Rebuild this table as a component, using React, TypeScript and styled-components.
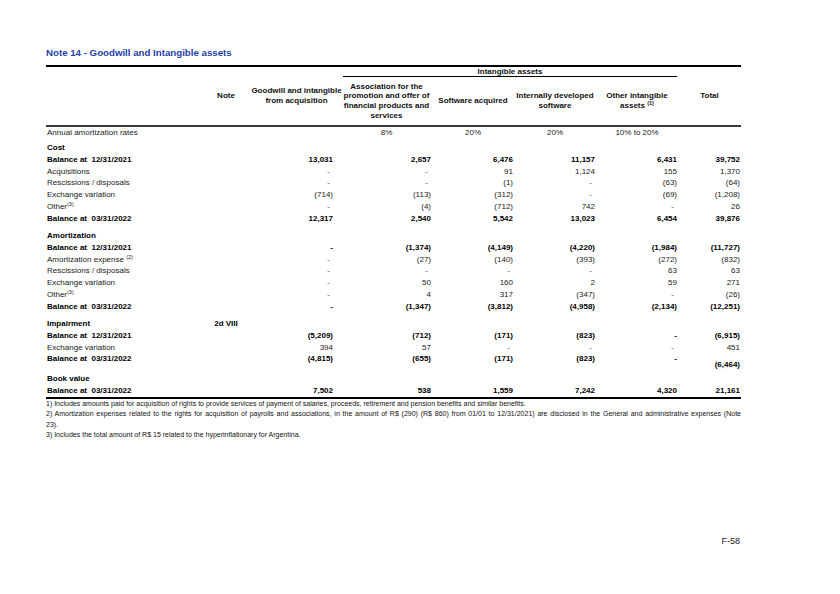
import React from 'react';
import styled, { createGlobalStyle } from 'styled-components';

const GlobalStyle = createGlobalStyle`
  html, body { margin: 0; padding: 0; background: #ffffff; }
  body { font-family: "Liberation Sans", Arial, sans-serif; color: #000; }
`;

const COLS = '154px 52px 89px 91px 82px 82px 82px 63px';
const NUM_PAD = [8, 1, 1, 1, 1, 1];

const Page = styled.div`
  width: 840px;
  height: 594px;
  box-sizing: border-box;
  padding: 47px 0 0 46px;
`;

const Sheet = styled.div`
  width: 695px;
`;

const Title = styled.h1`
  margin: 0 0 6px;
  font-size: 9.7px;
  line-height: 12px;
  font-weight: 700;
  color: #1f3fa6;
`;

const Header = styled.div`
  display: grid;
  grid-template-columns: ${COLS};
  grid-template-rows: 10px 48px;
  border-top: 2px solid #000;
  border-bottom: 2px solid #3a3a3a;
  font-size: 8px;
  font-weight: 700;
  line-height: 9.6px;
  color: #111;
`;

const HeadCell = styled.div<{ $col: string; $row: string }>`
  grid-column: ${(p) => p.$col};
  grid-row: ${(p) => p.$row};
  display: flex;
  align-items: center;
  justify-content: center;
  text-align: center;
  white-space: nowrap;
`;

const HeadText = styled.span`
  display: block;
  text-align: center;
`;

const GroupHead = styled.div`
  grid-column: 4 / 8;
  grid-row: 1;
  margin: 0 1px 0 2px;
  border-bottom: 1px solid #000;
  line-height: 9px;
  text-align: center;
`;

const Row = styled.div<{ $bold?: boolean; $gap?: number; $h?: number; $rule?: boolean }>`
  display: grid;
  grid-template-columns: ${COLS};
  height: ${(p) => p.$h ?? 11.75}px;
  margin-top: ${(p) => p.$gap ?? 0}px;
  font-size: 8px;
  line-height: 11.75px;
  font-weight: ${(p) => (p.$bold ? 700 : 400)};
  color: ${(p) => (p.$bold ? '#000' : '#222')};
  border-bottom: ${(p) => (p.$rule ? '2px solid #000' : 'none')};
`;

const Label = styled.div`
  padding-left: 1px;
  white-space: pre;
`;

const NoteCell = styled.div`
  text-align: center;
  font-weight: 700;
  color: #000;
`;

const Num = styled.div<{ $pad: number; $dash?: boolean; $low?: boolean }>`
  text-align: right;
  white-space: nowrap;
  padding-right: ${(p) => p.$pad + (p.$dash ? 3 : 0)}px;
  color: ${(p) => (p.$dash ? '#555' : 'inherit')};
  align-self: ${(p) => (p.$low ? 'end' : 'start')};
`;

const Rate = styled.div`
  text-align: center;
  white-space: nowrap;
`;

const Sup = styled.sup`
  font-size: 5.5px;
  line-height: 0;
  vertical-align: 3px;
`;

const Notes = styled.div`
  font-size: 7px;
  line-height: 10.5px;
  color: #111;
`;

const NoteLine = styled.div<{ $justify?: boolean }>`
  text-align: ${(p) => (p.$justify ? 'justify' : 'left')};
  text-align-last: ${(p) => (p.$justify ? 'justify' : 'auto')};
  white-space: nowrap;
`;

const PageNo = styled.div`
  margin-top: 95px;
  text-align: right;
  padding-right: 1px;
  font-size: 9px;
  line-height: 11px;
  color: #222;
`;

type DataRow = {
  label: React.ReactNode;
  values?: string[];
  bold?: boolean;
  gap?: number;
  note?: string;
  h?: number;
  lowLast?: boolean;
  rule?: boolean;
};

const other = (
  <>
    Other<Sup>(3)</Sup>
  </>
);

const rows: DataRow[] = [
  { label: 'Cost', bold: true, gap: 3.35 },
  { label: 'Balance at  12/31/2021', bold: true, values: ['13,031', '2,657', '6,476', '11,157', '6,431', '39,752'] },
  { label: 'Acquisitions', values: ['-', '-', '91', '1,124', '155', '1,370'] },
  { label: 'Rescissions / disposals', values: ['-', '-', '(1)', '-', '(63)', '(64)'] },
  { label: 'Exchange variation', values: ['(714)', '(113)', '(312)', '-', '(69)', '(1,208)'] },
  { label: other, values: ['-', '(4)', '(712)', '742', '-', '26'] },
  { label: 'Balance at  03/31/2022', bold: true, values: ['12,317', '2,540', '5,542', '13,023', '6,454', '39,876'] },

  { label: 'Amortization', bold: true, gap: 5.75 },
  { label: 'Balance at  12/31/2021', bold: true, values: ['-', '(1,374)', '(4,149)', '(4,220)', '(1,984)', '(11,727)'] },
  {
    label: (
      <>
        Amortization expense <Sup>(2)</Sup>
      </>
    ),
    values: ['-', '(27)', '(140)', '(393)', '(272)', '(832)'],
  },
  { label: 'Rescissions / disposals', values: ['-', '-', '-', '-', '63', '63'] },
  { label: 'Exchange variation', values: ['-', '50', '160', '2', '59', '271'] },
  { label: other, values: ['-', '4', '317', '(347)', '-', '(26)'] },
  { label: 'Balance at  03/31/2022', bold: true, values: ['-', '(1,347)', '(3,812)', '(4,958)', '(2,134)', '(12,251)'] },

  { label: 'Impairment', bold: true, gap: 5.75, note: '2d VIII' },
  { label: 'Balance at  12/31/2021', bold: true, values: ['(5,209)', '(712)', '(171)', '(823)', '-', '(6,915)'] },
  { label: 'Exchange variation', values: ['394', '57', '-', '-', '-', '451'] },
  { label: 'Balance at  03/31/2022', bold: true, h: 17.5, lowLast: true, values: ['(4,815)', '(655)', '(171)', '(823)', '-', '(6,464)'] },

  { label: 'Book value', bold: true, gap: 2.25 },
  { label: 'Balance at  03/31/2022', bold: true, rule: true, values: ['7,502', '538', '1,559', '7,242', '4,320', '21,161'] },
];

export default function App() {
  return (
    <>
      <GlobalStyle />
      <Page>
        <Sheet>
          <Title>Note 14 - Goodwill and Intangible assets</Title>

          <Header>
            <HeadCell $col="2" $row="1 / 3">
              <HeadText>Note</HeadText>
            </HeadCell>
            <HeadCell $col="3" $row="1 / 3">
              <HeadText>
                Goodwill and intangible
                <br />
                from acquisition
              </HeadText>
            </HeadCell>
            <GroupHead>Intangible assets</GroupHead>
            <HeadCell $col="4" $row="2">
              <HeadText>
                Association for the
                <br />
                promotion and offer of
                <br />
                financial products and
                <br />
                services
              </HeadText>
            </HeadCell>
            <HeadCell $col="5" $row="2">
              <HeadText>Software acquired</HeadText>
            </HeadCell>
            <HeadCell $col="6" $row="2">
              <HeadText>
                Internally developed
                <br />
                software
              </HeadText>
            </HeadCell>
            <HeadCell $col="7" $row="2">
              <HeadText>
                Other intangible
                <br />
                assets <Sup>(1)</Sup>
              </HeadText>
            </HeadCell>
            <HeadCell $col="8" $row="1 / 3">
              <HeadText>Total</HeadText>
            </HeadCell>
          </Header>

          <Row>
            <Label>Annual amortization rates</Label>
            <div />
            <div />
            <Rate>8%</Rate>
            <Rate>20%</Rate>
            <Rate>20%</Rate>
            <Rate>10% to 20%</Rate>
            <div />
          </Row>

          {rows.map((r, i) => (
            <Row key={i} $bold={r.bold} $gap={r.gap} $h={r.h} $rule={r.rule}>
              <Label>{r.label}</Label>
              <NoteCell>{r.note ?? ''}</NoteCell>
              {(r.values ?? ['', '', '', '', '', '']).map((v, j) => (
                <Num
                  key={j}
                  $pad={NUM_PAD[j]}
                  $dash={v === '-' && !r.bold}
                  $low={r.lowLast && j === 5}
                >
                  {v}
                </Num>
              ))}
            </Row>
          ))}

          <Notes>
            <NoteLine>
              1) Includes amounts paid for acquisition of rights to provide services of payment of salaries, proceeds,
              retirement and pension benefits and similar benefits.
            </NoteLine>
            <NoteLine $justify>
              2) Amortization expenses related to the rights for acquisition of payrolls and associations, in the amount
              of R$ (290) (R$ 860) from 01/01 to 12/31/2021) are disclosed in the General and administrative expenses
              (Note
            </NoteLine>
            <NoteLine>23).</NoteLine>
            <NoteLine>3) Includes the total amount of R$ 15 related to the hyperinflationary for Argentina.</NoteLine>
          </Notes>

          <PageNo>F-58</PageNo>
        </Sheet>
      </Page>
    </>
  );
}
